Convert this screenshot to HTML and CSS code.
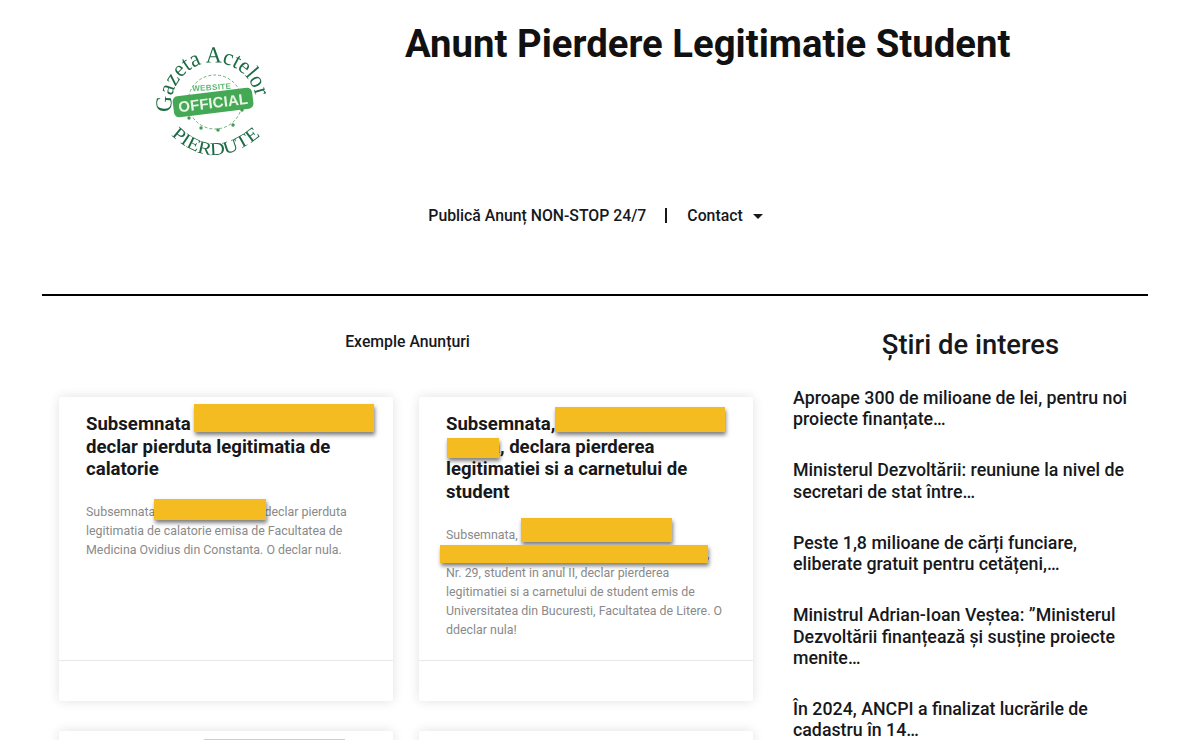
FILE: index.html
```html
<!DOCTYPE html>
<html lang="ro">
<head>
    <meta charset="UTF-8">
    <meta name="viewport" content="width=device-width, initial-scale=1.0">
    <title>Anunt Pierdere Legitimatie Student</title>
    <link rel="stylesheet" href="styles.css">
</head>
<body>

    <header class="site-header">
        <div class="logo-box">
            <svg class="logo" width="120" height="116" viewBox="0 0 120 116">
                <defs>
                    <path id="arc-top" d="M19 67 A42 42 0 0 1 103 53 A42 42 0 0 1 105 65"/>
                    <path id="arc-bottom" d="M18 90 Q61 130 108 90"/>
                </defs>
                <text class="logo-top"><textPath href="#arc-top" textLength="132" lengthAdjust="spacingAndGlyphs">Gazeta Actelor</textPath></text>
                <text class="logo-bottom"><textPath href="#arc-bottom" textLength="100" lengthAdjust="spacingAndGlyphs">PIERDUTE</textPath></text>
                <circle cx="62" cy="57" r="27" fill="none" stroke="#4a9a5c" stroke-width="0.8" stroke-dasharray="3 2"/>
                <text class="logo-website" x="59" y="45" text-anchor="middle" transform="rotate(-4 59 45)">WEBSITE</text>
                <rect x="20" y="47" width="80" height="21" rx="5" fill="#45a854" transform="rotate(-7 60 57)"/>
                <text class="logo-official" x="60" y="63" text-anchor="middle" textLength="70" lengthAdjust="spacing" transform="rotate(-7 60 57)">OFFICIAL</text>
                <circle cx="36" cy="73" r="1.7" fill="#3f9a55"/>
                <circle cx="48" cy="83" r="1.7" fill="#3f9a55"/>
                <circle cx="65" cy="85" r="1.7" fill="#3f9a55"/>
                <circle cx="80" cy="80" r="1.7" fill="#3f9a55"/>
                <circle cx="89" cy="65" r="1.7" fill="#3f9a55"/>
            </svg>
        </div>
        <h1 class="page-title">Anunt Pierdere Legitimatie Student</h1>
    </header>

    <nav class="main-nav">
        <a href="#">Publică Anunț NON-STOP 24/7</a>
        <span class="nav-sep"></span>
        <a href="#">Contact<span class="caret"></span></a>
    </nav>

    <hr class="divider">

    <main class="content">
        <section class="examples">
            <h2 class="examples-title">Exemple Anunțuri</h2>
            <div class="cards">
                <article class="card">
                    <div class="card-body">
                        <h3>Subsemnata <br>declar pierduta legitimatia de calatorie</h3>
                        <p>Subsemnata <span class="gap-a"></span>declar pierduta legitimatia de calatorie emisa de Facultatea de Medicina Ovidius din Constanta. O declar nula.</p>
                    </div>
                    <div class="card-foot"></div>
                    <span class="redact r1"></span>
                    <span class="redact r2"></span>
                </article>
                <article class="card">
                    <div class="card-body">
                        <h3>Subsemnata,<br><span class="gap-b"></span>a, declara pierderea legitimatiei si a carnetului de student</h3>
                        <p>Subsemnata,<br><span class="gap-c"></span>,<br>Nr. 29, student in anul II, declar pierderea legitimatiei si a carnetului de student emis de Universitatea din Bucuresti, Facultatea de Litere. O ddeclar nula!</p>
                    </div>
                    <div class="card-foot"></div>
                    <span class="redact r3"></span>
                    <span class="redact r4"></span>
                    <span class="redact r5"></span>
                    <span class="redact r6"></span>
                </article>
                <article class="card">
                    <span class="redact r7"></span>
                </article>
                <article class="card"></article>
            </div>
        </section>

        <aside class="news">
            <h2>Știri de interes</h2>
            <ul>
                <li>Aproape 300 de milioane de lei, pentru noi proiecte finanțate…</li>
                <li>Ministerul Dezvoltării: reuniune la nivel de secretari de stat între…</li>
                <li>Peste 1,8 milioane de cărți funciare, eliberate gratuit pentru cetățeni,…</li>
                <li>Ministrul Adrian-Ioan Veștea: ”Ministerul Dezvoltării finanțează și susține proiecte menite…</li>
                <li>În 2024, ANCPI a finalizat lucrările de cadastru în 14…</li>
            </ul>
        </aside>
    </main>

</body>
</html>
```

FILE: styles.css
```css
* {
    margin: 0;
    padding: 0;
    box-sizing: border-box;
}

html, body {
    width: 100%;
    height: 100%;
    overflow: hidden;
}

body {
    font-family: 'Roboto', 'Liberation Sans', sans-serif;
    background: #fff;
    color: #16181c;
}

.site-header {
    display: flex;
    height: 180px;
    padding-top: 22px;
}

.logo-box {
    width: 405px;
    padding: 23px 0 0 153px;
}

.logo {
    display: block;
    overflow: visible;
    filter: blur(0.3px);
}

.logo-top {
    font-family: 'Liberation Serif', serif;
    font-size: 23px;
    fill: #1d6b45;
}

.logo-bottom {
    font-family: 'Liberation Serif', serif;
    font-size: 18px;
    fill: #1d6b45;
}

.logo-website {
    font-family: 'Liberation Sans', sans-serif;
    font-size: 8px;
    font-weight: bold;
    letter-spacing: 0.4px;
    fill: #5fb872;
}

.logo-official {
    font-family: 'Liberation Sans', sans-serif;
    font-size: 15px;
    font-weight: bold;
    fill: #e8f5e6;
}

.page-title {
    font-size: 38.3px;
    font-weight: 700;
    line-height: 44px;
    color: #111;
}

.main-nav {
    display: flex;
    justify-content: center;
    align-items: center;
    height: 30px;
    margin-top: 20px;
    padding-right: 9px;
    font-size: 15.8px;
    font-weight: 500;
}

.main-nav a {
    color: #16181c;
    text-decoration: none;
}

.nav-sep {
    width: 2px;
    height: 15px;
    margin: 0 20px 0 19px;
    background: #16181c;
}

.caret {
    display: inline-block;
    margin-left: 10px;
    vertical-align: 2px;
    border-top: 5px solid #16181c;
    border-left: 5px solid transparent;
    border-right: 5px solid transparent;
}

.divider {
    height: 2px;
    margin: 64px 52px 0 42px;
    border: 0;
    background: #000;
}

.content {
    display: flex;
    padding: 0 52px 0 59px;
}

.examples {
    width: 694px;
    flex-shrink: 0;
}

.examples-title {
    padding-top: 36px;
    padding-left: 3px;
    font-size: 15.8px;
    font-weight: 500;
    line-height: 20px;
    text-align: center;
}

.cards {
    display: grid;
    grid-template-columns: 334px 334px;
    gap: 30px 26px;
    margin-top: 45px;
}

.card {
    position: relative;
    display: flex;
    flex-direction: column;
    height: 304px;
    background: #fff;
    border-radius: 3px;
    box-shadow: 0 0 12px rgba(0, 0, 0, 0.12);
}

.card-body {
    flex: 1;
    padding: 16px 26px 0 27px;
}

.card-body h3 {
    font-size: 18.6px;
    font-weight: 700;
    line-height: 22.7px;
}

.card-body p {
    margin-top: 21px;
    font-size: 12.4px;
    line-height: 19px;
    color: #8a8a8a;
}

.card-foot {
    height: 41px;
    border-top: 1px solid #e8e8e8;
}

.gap-a {
    display: inline-block;
    width: 106px;
}

.gap-b {
    display: inline-block;
    width: 44px;
}

.gap-c {
    display: inline-block;
    width: 261px;
}

.redact {
    position: absolute;
    background: #f5bc22;
    box-shadow: 1px 3px 4px rgba(0, 0, 0, 0.5);
}

.r1 { left: 135px; top: 7px; width: 180px; height: 28px; }
.r2 { left: 95px; top: 102px; width: 112px; height: 21px; }
.r3 { left: 136px; top: 10px; width: 170px; height: 25px; }
.r4 { left: 28px; top: 41px; width: 52px; height: 20px; }
.r5 { left: 102px; top: 121px; width: 151px; height: 24px; }
.r6 { left: 21px; top: 148px; width: 268px; height: 18px; }
.r7 { left: 145px; top: 8px; width: 141px; height: 20px; background: #e8d84a; box-shadow: none; }

.news {
    width: 355px;
    margin-left: 40px;
    flex-shrink: 0;
}

.news h2 {
    padding-top: 29px;
    font-size: 27.4px;
    font-weight: 500;
    line-height: 40px;
    text-align: center;
}

.news ul {
    list-style: none;
    margin-top: 22px;
    padding-right: 15px;
}

.news li {
    margin-bottom: 29.6px;
    font-size: 17.8px;
    font-weight: 500;
    line-height: 21.4px;
}
```
